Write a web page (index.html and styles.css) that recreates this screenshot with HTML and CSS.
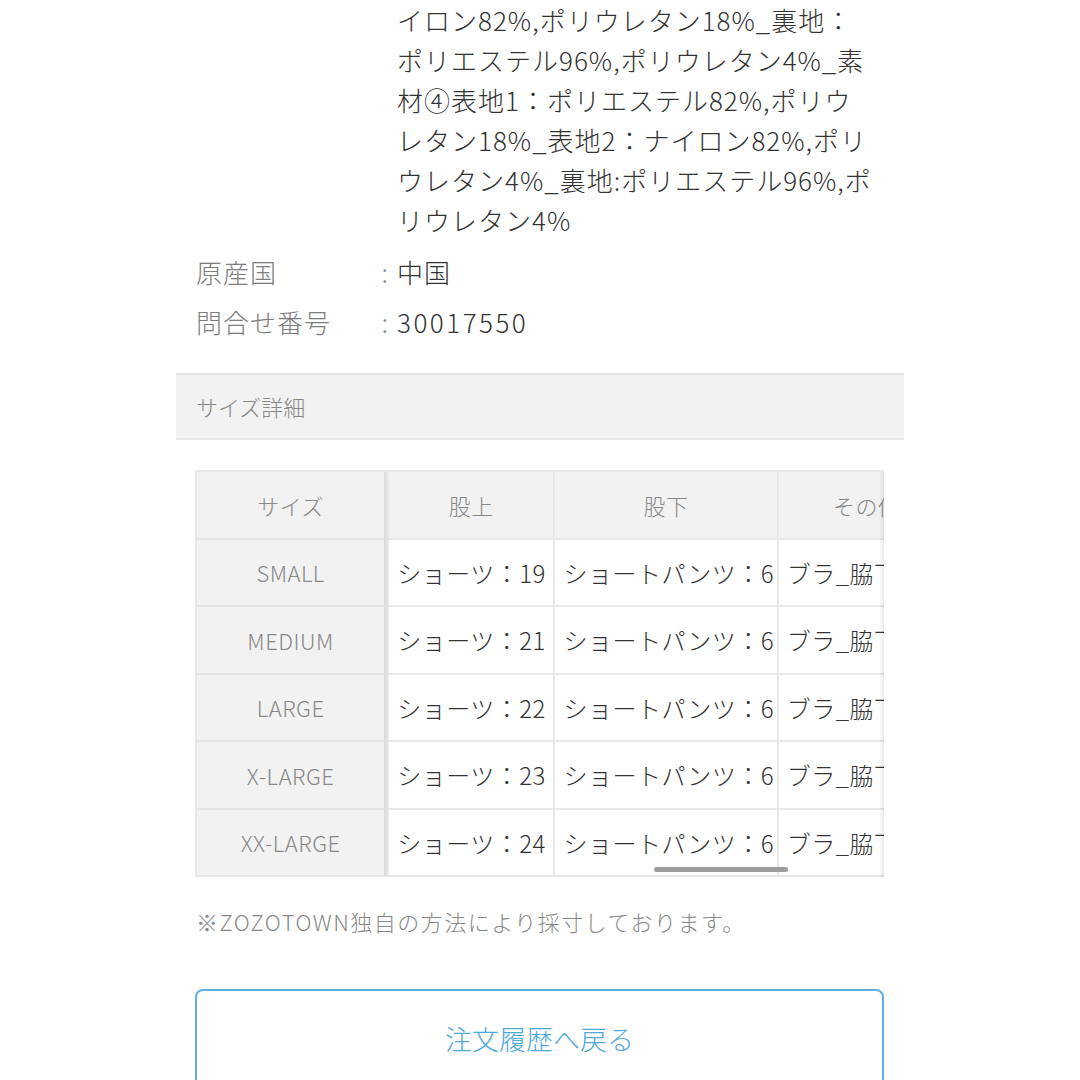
FILE: index.html
```html
<!DOCTYPE html>
<html lang="ja">
<head>
  <meta charset="UTF-8" />
  <meta name="viewport" content="width=device-width, initial-scale=1.0"/>
  <title>注文詳細</title>
  <link rel="stylesheet" href="styles.css">
</head>
<body>

  <main class="page">

    <dl class="spec">
      <div class="spec-row">
        <dt></dt>
        <dd>イロン82%,ポリウレタン18%_裏地：<br>ポリエステル96%,ポリウレタン4%_素<br>材④表地1：ポリエステル82%,ポリウ<br>レタン18%_表地2：ナイロン82%,ポリ<br>ウレタン4%_裏地:ポリエステル96%,ポ<br>リウレタン4%</dd>
      </div>
      <div class="spec-row first-label">
        <dt>原産国<span class="colon">:</span></dt>
        <dd>中国</dd>
      </div>
      <div class="spec-row">
        <dt>問合せ番号<span class="colon">:</span></dt>
        <dd class="num">30017550</dd>
      </div>
    </dl>

    <div class="section-head">サイズ詳細</div>

    <div class="size-wrap">
      <table class="size-table">
        <thead>
          <tr>
            <th class="size-name">サイズ</th>
            <th class="col-a">股上</th>
            <th class="col-b">股下</th>
            <th class="col-c">その他</th>
          </tr>
        </thead>
        <tbody>
          <tr>
            <th class="size-name">SMALL</th>
            <td>ショーツ：19</td>
            <td>ショートパンツ：6</td>
            <td>ブラ_脇下：12</td>
          </tr>
          <tr>
            <th class="size-name">MEDIUM</th>
            <td>ショーツ：21</td>
            <td>ショートパンツ：6</td>
            <td>ブラ_脇下：12</td>
          </tr>
          <tr>
            <th class="size-name">LARGE</th>
            <td>ショーツ：22</td>
            <td>ショートパンツ：6</td>
            <td>ブラ_脇下：13</td>
          </tr>
          <tr>
            <th class="size-name">X-LARGE</th>
            <td>ショーツ：23</td>
            <td>ショートパンツ：6</td>
            <td>ブラ_脇下：13</td>
          </tr>
          <tr>
            <th class="size-name">XX-LARGE</th>
            <td>ショーツ：24</td>
            <td>ショートパンツ：6</td>
            <td>ブラ_脇下：14</td>
          </tr>
        </tbody>
      </table>
      <div class="scroll-thumb"></div>
    </div>

    <p class="note">※ZOZOTOWN独自の方法により採寸しております。</p>

    <a class="back-btn" href="#">注文履歴へ戻る</a>

  </main>

</body>
</html>
```

FILE: styles.css
```css
body {
  margin: 0;
  padding: 0;
  background-color: #fff;
  color: #333;
  font-family: "Noto Sans CJK JP", sans-serif;
  font-weight: 300;
}

.page {
  width: 728px;
  margin: 0 auto;
}

/* 商品スペック */
.spec {
  margin: 0;
  padding: 0 20px;
}

.spec-row {
  display: flex;
  font-size: 26px;
  line-height: 40px;
  letter-spacing: 1px;
  margin-bottom: 10px;
}

.spec-row.first-label {
  margin-top: 12px;
}

.spec-row dt {
  flex: 0 0 201px;
  display: flex;
  justify-content: space-between;
  color: #7d7d7d;
}

.spec-row .colon {
  color: #888;
  padding-right: 8px;
}

.spec-row dd {
  margin: 0;
  flex: 1;
  color: #333;
}

.spec-row dd.num {
  letter-spacing: 2.5px;
}

/* サイズ詳細 */
.section-head {
  margin-top: 31px;
  height: 63px;
  line-height: 63px;
  padding: 0 20px;
  background-color: #f2f2f2;
  border-top: 2px solid #e6e6e6;
  border-bottom: 2px solid #e6e6e6;
  color: #888;
  font-size: 22px;
}

.size-wrap {
  position: relative;
  margin: 30px 20px 0 19px;
  overflow: hidden;
  border-top: 2px solid #e8e8e8;
  border-left: 2px solid #e8e8e8;
}

.size-wrap::after {
  content: "";
  position: absolute;
  top: 0;
  right: 0;
  bottom: 0;
  width: 5px;
  background: linear-gradient(to right, rgba(0,0,0,0), rgba(0,0,0,0.09));
}

.size-table {
  border-collapse: separate;
  border-spacing: 0;
  table-layout: fixed;
  width: 760px;
}

.size-table th,
.size-table td {
  height: 65.5px;
  padding: 0 10px;
  border-right: 2px solid #e8e8e8;
  border-bottom: 2px solid #e8e8e8;
  white-space: nowrap;
  overflow: hidden;
}

.size-table th {
  font-weight: 300;
  font-size: 22px;
  letter-spacing: 0.5px;
  color: #888;
  text-align: center;
  background-color: #f2f2f2;
}

.size-table td {
  padding: 0 8px;
  font-size: 24px;
  letter-spacing: 0.5px;
  color: #333;
  background-color: #fff;
}

.size-table .size-name {
  width: 167px;
  border-right-color: #dcdcdc;
  box-shadow: 2px 0 3px rgba(0,0,0,0.06);
  position: relative;
  z-index: 1;
}

.size-table .col-a,
.size-table tbody td:first-of-type {
  border-left: 3px solid #efefef;
}

.size-table .col-a {
  width: 144px;
}

.size-table .col-b {
  width: 201px;
}

.size-table .col-c {
  width: 156px;
}

.scroll-thumb {
  position: absolute;
  left: 457px;
  bottom: 5px;
  width: 134px;
  height: 5px;
  border-radius: 3px;
  background-color: #9c9c9c;
}

.note {
  margin: 28px 0 0;
  padding: 0 20px;
  font-size: 22px;
  line-height: 32px;
  letter-spacing: 1.5px;
  color: #888;
}

.back-btn {
  display: block;
  margin: 52px 20px 0 19px;
  height: 96px;
  line-height: 96px;
  border: 2px solid #5eb1df;
  border-radius: 8px;
  text-align: center;
  text-decoration: none;
  font-size: 27px;
  color: #4ea8d9;
}
```
